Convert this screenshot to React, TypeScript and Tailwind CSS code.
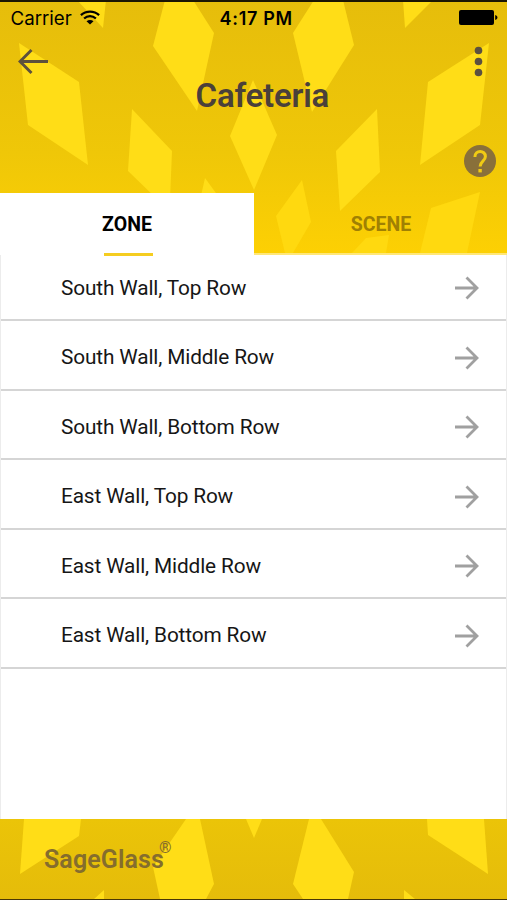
import React, { useState } from 'react';

type Tab = 'zone' | 'scene';

const zones = [
  'South Wall, Top Row',
  'South Wall, Middle Row',
  'South Wall, Bottom Row',
  'East Wall, Top Row',
  'East Wall, Middle Row',
  'East Wall, Bottom Row',
];

const headerShards = [
  '77,0 106,0 103,28',
  '19,43 79,82 88,165 28,125',
  '165,0 193,0 214,33 197,111 153,46',
  '132,109 172,151 170,200 158,200 128,171',
  '205,178 221,200 200,200',
  '253,80 277,135 254,190 230,136',
  '314,0 343,0 354,45 312,112 293,33',
  '403,0 433,0 405,28',
  '489,43 480,125 420,165 428,82',
  '377,109 380,172 340,211 336,151',
];

const fadedShards = [
  '302,180 311,222 293,253 285,253 276,216',
  '480,192 467,253 420,253 431,208',
  '389,235 386,253 352,253 366,238',
];

const footerShards = [
  '24,0 81,0 79,17 20,55',
  '186,0 200,0 214,65 206,80 160,80 153,48',
  '104,71 104,80 94,80',
  '246,0 262,0 254,19',
  '309,0 321,0 354,53 348,80 303,80 293,65',
  '427,0 484,0 488,55 428,16',
  '404,71 404,80 415,80',
];

function StatusBar() {
  return (
    <div className="relative flex h-[35px] items-center text-black">
      <span className="ml-[10.5px] mt-[3px] w-[61px] whitespace-nowrap text-[18.7px] leading-none">Carrier</span>
      <svg className="ml-[8.5px] mt-[-1px]" width="20" height="15" viewBox="0 0 20 15" fill="none" stroke="#000" strokeWidth="2.3">
        <path d="M0.9 5.2C6 .4 14 .4 19.1 5.2" />
        <path d="M4.1 8.5c3.4-3.1 8.4-3.1 11.8 0" />
        <path d="M10 14.6L6.5 11.3c2-1.8 5-1.8 7 0z" fill="#000" stroke="none" />
      </svg>
      <span className="absolute left-[219.5px] top-[9.5px] text-[18px] font-semibold leading-none tracking-[0.7px]">4:17 PM</span>
      <svg className="ml-auto mr-[9px]" width="39" height="15" viewBox="0 0 39 15">
        <rect width="35" height="15" rx="2" />
        <path d="M36.2 5c3 .8 3 4.2 0 5z" />
      </svg>
    </div>
  );
}

function Header() {
  return (
    <div className="relative h-[193px] font-['Inter','Liberation_Sans',sans-serif]">
      <StatusBar />
      <div className="flex items-start justify-between pl-[18px] pr-[24px] pt-[11px]">
        <button type="button" aria-label="Back">
          <svg width="31" height="31" viewBox="0 0 31 31" fill="none" stroke="#5e513c" strokeWidth="3">
            <path d="M30 15.5H2M13.5 4L2 15.5L13.5 27" />
          </svg>
        </button>
        <button type="button" aria-label="More">
          <svg width="9" height="31" viewBox="0 0 9 31" fill="#5b5040">
            <circle cx="4.5" cy="4.5" r="3.8" />
            <circle cx="4.5" cy="15.5" r="3.8" />
            <circle cx="4.5" cy="26.5" r="3.8" />
          </svg>
        </button>
      </div>
      <h1 className="absolute left-[195.5px] top-[79px] font-['Roboto',sans-serif] text-[33px] font-semibold leading-[34px] tracking-[-0.2px] text-[#4a403a]">
        Cafeteria
      </h1>
      <button type="button" aria-label="Help" className="absolute left-[464px] top-[145px]">
        <svg width="32" height="32" viewBox="0 0 32 32" fill="none">
          <circle cx="16" cy="16" r="16" fill="#89703a" />
          <path d="M10.9 12.1c0-7.6 10.5-7.2 10.5-.6 0 4.6-5.3 4.6-5.3 10" stroke="#f0cb14" strokeWidth="3" />
          <rect x="14.4" y="24" width="3.4" height="3.4" fill="#f0cb14" />
        </svg>
      </button>
    </div>
  );
}

export default function App() {
  const [tab, setTab] = useState<Tab>('zone');

  return (
    <div className="flex h-[900px] w-[507px] flex-col overflow-hidden border-b border-[#4a3806] bg-white font-['Roboto',sans-serif]">
      <div className="relative isolate h-[255px] bg-linear-to-b from-[#e6bd0b] via-[#efc708] via-60% to-[#fdd003]">
        <svg className="absolute inset-0 -z-10" width="507" height="255">
          {headerShards.map(points => (
            <polygon key={points} points={points} fill="#ffdd17" />
          ))}
          {fadedShards.map(points => (
            <polygon key={points} points={points} fill="#ffd90f" />
          ))}
        </svg>
        <div className="absolute inset-x-0 top-0 h-[2px] bg-[#1b1502]" />
        <Header />
        <div className="flex h-[62px] text-[19.5px] font-bold">
          <button
            type="button"
            onClick={() => setTab('zone')}
            className="relative w-[254px] bg-white pt-[2px] text-black"
          >
            ZONE
            {tab === 'zone' && <span className="absolute left-[104px] top-[60px] h-[3px] w-[49px] bg-[#f5cd20]" />}
          </button>
          <button
            type="button"
            onClick={() => setTab('scene')}
            className="w-[253px] border-b-2 border-[#ffe778] pt-[4px] pl-[1px] text-[#a08003]"
          >
            SCENE
          </button>
        </div>
      </div>

      {/* Zone list */}
      <div className="flex-1 border-x border-[#ececec]">
        {zones.map((zone, index) => (
          <div
            key={zone}
            className={`flex items-center justify-between border-b-2 border-[#d5d5d5] pl-[60px] pr-[27px] ${
              index === 0 ? 'h-[66px] pt-[2px]' : 'h-[69.5px] pt-[6px]'
            }`}
          >
            <span className="text-[20.8px] leading-none tracking-[-0.14px] text-[#161616]">{zone}</span>
            <svg width="25" height="24" viewBox="0 0 25 24" fill="none" stroke="#a0a0a0" strokeWidth="2.8">
              <path d="M1 12h22M12.5 1.5L23 12L12.5 22.5" />
            </svg>
          </div>
        ))}
      </div>

      <div className="relative isolate h-[80px] bg-linear-to-b from-[#ebc408] to-[#e5bc0a]">
        <svg className="absolute inset-0 -z-10" width="507" height="80">
          {footerShards.map(points => (
            <polygon key={points} points={points} fill="#ffdd17" />
          ))}
        </svg>
        <div className="flex pl-[44px] pt-[26px] text-[#856d2d]">
          <span className="text-[25px] font-semibold leading-[30px] tracking-[0.1px]">SageGlass</span>
          <span className="-ml-[5px] -mt-[5px] text-[16px] leading-[16px]">®</span>
        </div>
      </div>
    </div>
  );
}
